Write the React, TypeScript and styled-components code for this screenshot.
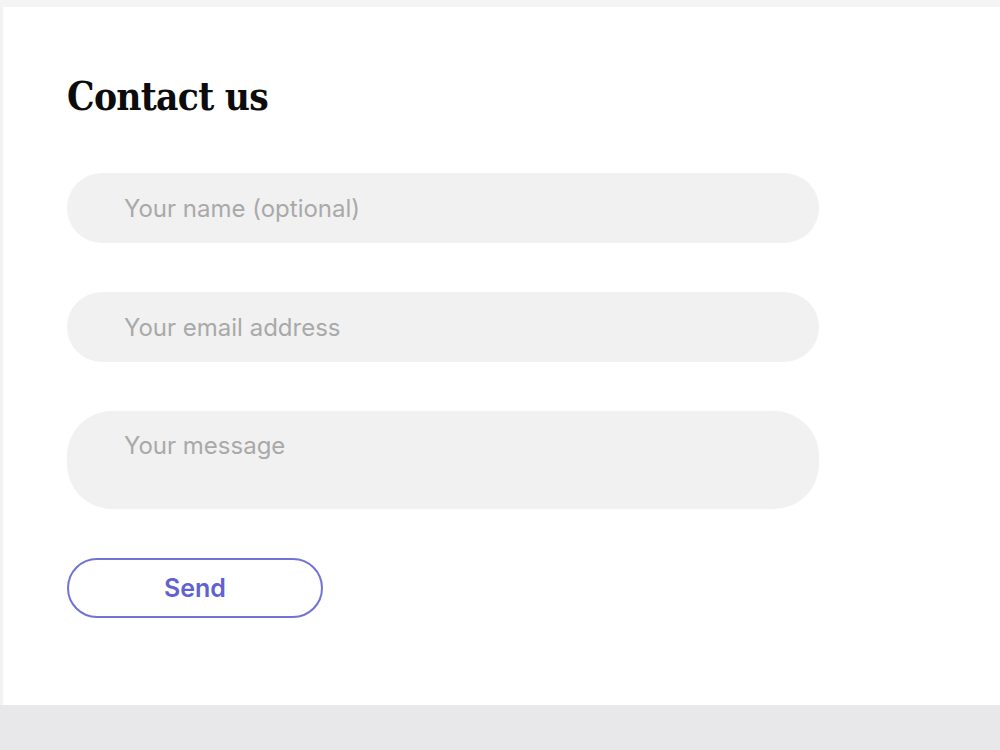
import React from "react";
import styled, { createGlobalStyle } from "styled-components";

const GlobalStyles = createGlobalStyle`
  html,
  body {
    margin: 0;
    height: 100%;
  }

  body {
    background: #e8e8ea;
    font-family: "Inter", "Liberation Sans", sans-serif;
  }
`;

const Page = styled.div`
  height: 750px;
  display: flex;
  flex-direction: column;
  background: #e8e8ea;
`;

const TopBar = styled.div`
  height: 7px;
  background: #f4f4f4;
`;

const Frame = styled.div`
  display: flex;
  height: 698px;
  background: #f2f2f3;
  padding-left: 3px;
`;

const Card = styled.section`
  flex: 1;
  background: #ffffff;
  padding: 65px 0 0 64px;
`;

const Title = styled.h1`
  margin: 0 0 51px;
  font-family: "DejaVu Serif Condensed", "DejaVu Serif", serif;
  font-stretch: condensed;
  font-weight: 700;
  font-size: 38.5px;
  line-height: 50px;
  letter-spacing: -0.7px;
  color: #0c0c0c;
`;

const Form = styled.form`
  display: flex;
  flex-direction: column;
  gap: 49px;
  width: 752px;
`;

const Field = styled.input`
  height: 70px;
  border: none;
  border-radius: 35px;
  background: #f1f1f1;
  padding: 0 0 0 57px;
  font-family: "Inter", "Liberation Sans", sans-serif;
  font-size: 24px;
  color: #333;
  outline: none;

  &::placeholder {
    color: #a9a9a9;
  }
`;

const Message = styled.textarea`
  height: 98px;
  box-sizing: border-box;
  border: none;
  border-radius: 45px;
  background: #f1f1f1;
  padding: 20px 0 0 57px;
  resize: none;
  font-family: "Inter", "Liberation Sans", sans-serif;
  font-size: 24px;
  line-height: 30px;
  color: #333;
  outline: none;

  &::placeholder {
    color: #a9a9a9;
  }
`;

const SendButton = styled.button`
  width: 256px;
  height: 60px;
  border: 2px solid #7073d6;
  border-radius: 30px;
  background: #ffffff;
  color: #5f62cf;
  font-family: "Inter", "Liberation Sans", sans-serif;
  font-weight: 600;
  font-size: 25px;
  cursor: pointer;
`;

const App: React.FC = () => {
  return (
    <Page>
      <GlobalStyles />
      <TopBar />
      <Frame>
        <Card>
          <Title>Contact us</Title>
          <Form onSubmit={e => e.preventDefault()}>
            <Field type="text" placeholder="Your name (optional)" />
            <Field type="email" placeholder="Your email address" />
            <Message placeholder="Your message" />
            <div>
              <SendButton type="submit">Send</SendButton>
            </div>
          </Form>
        </Card>
      </Frame>
    </Page>
  );
};

export default App;
